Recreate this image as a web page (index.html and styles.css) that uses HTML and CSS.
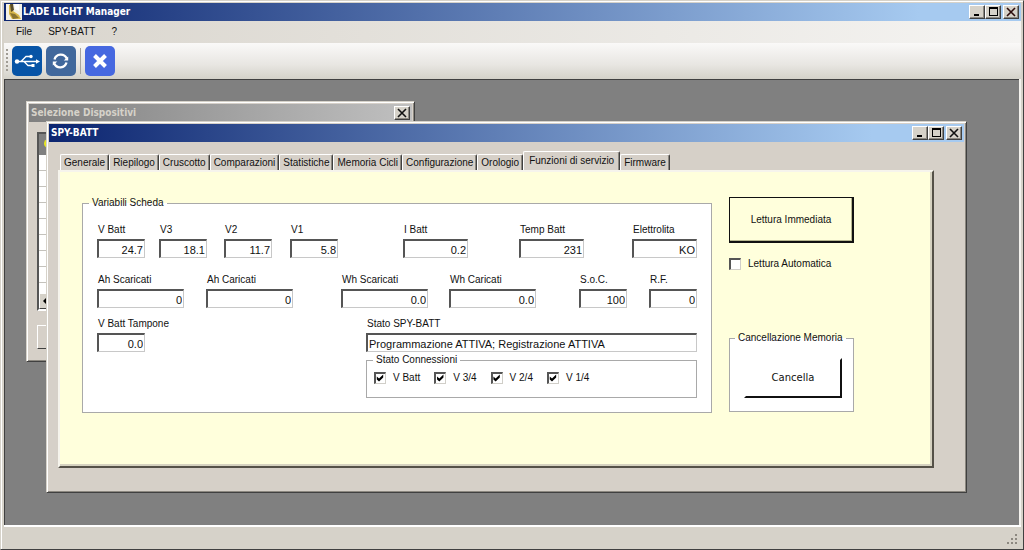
FILE: index.html
```html
<!DOCTYPE html>
<html lang="it">
<head>
<meta charset="utf-8">
<title>LADE LIGHT Manager</title>
<link rel="stylesheet" href="styles.css">
</head>
<body>
<div class="app">
  <header class="titlebar">
    <svg class="app-icon" viewBox="0 0 16 16" aria-hidden="true"><rect width="16" height="16" fill="#f4f1e6"/><path d="M3 1h4v6l6 4 2 4H6L3 10z" fill="#d9b84a"/><path d="M4 0h3l1 6-3 2z" fill="#5a4d2a"/><path d="M4 9l5 1 4 4-6 1z" fill="#8a7430"/><path d="M8 0h5v7l-4-2z" fill="#fff"/></svg>
    <h1 class="title">LADE LIGHT Manager</h1>
    <div class="controls">
      <button class="cap" type="button" aria-label="Riduci a icona"><svg viewBox="0 0 12 10"><path d="M3 7h5v2H3z"/></svg></button>
      <button class="cap" type="button" aria-label="Ingrandisci"><svg viewBox="0 0 12 10"><path fill-rule="evenodd" d="M2 0h9v9H2zM3 2v6h7V2z"/></svg></button>
      <button class="cap close" type="button" aria-label="Chiudi"><svg viewBox="0 0 12 10"><path d="M2 1l8 8M10 1L2 9" stroke="#2a0a0a" stroke-width="1.600"/></svg></button>
    </div>
  </header>
  <nav class="menu">
    <button type="button">File</button>
    <button type="button">SPY-BATT</button>
    <button type="button">?</button>
  </nav>
  <div class="toolbar">
    <span class="grip"></span>
    <button class="tool usb" type="button" aria-label="USB"><svg viewBox="0 0 30 30"><g fill="none" stroke="#fff" stroke-width="1.300"><path d="M5 15.500h20M9 15.500l5-5h4M12 15.500l4 4h4"/></g><circle cx="5" cy="15.500" r="2.200" fill="#fff"/><path d="M24 13.300l4 2.200-4 2.200z" fill="#fff"/><circle cx="19" cy="10.500" r="1.700" fill="#fff"/><path d="M19.500 18h3v3h-3z" fill="#fff"/></svg></button>
    <button class="tool sync" type="button" aria-label="Aggiorna"><svg viewBox="0 0 30 30"><g fill="none" stroke="#fff" stroke-width="2.300"><path d="M8.500 13.500a6.500 6.500 0 0 1 12.200-1"/><path d="M20.500 16.500a6.500 6.500 0 0 1-12.200 1"/></g><path d="M22.200 10.500v4h-4.500zM6.800 19.500v-4h4.500z" fill="#fff"/></svg></button>
    <span class="sep"></span>
    <button class="tool stop" type="button" aria-label="Chiudi"><svg viewBox="0 0 30 30"><path d="M9.500 9.500l11 11M20.500 9.500l-11 11" stroke="#fff" stroke-width="4"/></svg></button>
  </div>

  <main class="mdi">
    <section class="window devices">
      <header class="titlebar inactive">
        <h2 class="title">Selezione Dispositivi</h2>
        <div class="controls">
          <button class="cap" type="button" aria-label="Chiudi"><svg viewBox="0 0 12 10"><path d="M2 1l8 8M10 1L2 9" stroke="#111" stroke-width="1.600"/></svg></button>
        </div>
      </header>
      <div class="devices-body">
        <div class="list">
          <div class="list-head"><span class="dot"></span></div>
          <div class="list-rows"></div>
          <div class="list-scroll"><button class="arrow" type="button" aria-label="Scorri a sinistra"><svg viewBox="0 0 12 12"><path d="M6 2v8L2 6z"/></svg></button></div>
        </div>
        <button class="wide" type="button" aria-label="Apri"></button>
      </div>
    </section>

    <section class="window spy">
      <header class="titlebar">
        <h2 class="title">SPY-BATT</h2>
        <div class="controls">
          <button class="cap" type="button" aria-label="Riduci a icona"><svg viewBox="0 0 12 10"><path d="M3 7h5v2H3z"/></svg></button>
          <button class="cap" type="button" aria-label="Ingrandisci"><svg viewBox="0 0 12 10"><path fill-rule="evenodd" d="M2 0h9v9H2zM3 2v6h7V2z"/></svg></button>
          <button class="cap close" type="button" aria-label="Chiudi"><svg viewBox="0 0 12 10"><path d="M2 1l8 8M10 1L2 9" stroke="#111" stroke-width="1.600"/></svg></button>
        </div>
      </header>
      <div class="tabs" role="tablist">
        <button class="tab" role="tab" type="button">Generale</button>
        <button class="tab" role="tab" type="button">Riepilogo</button>
        <button class="tab" role="tab" type="button">Cruscotto</button>
        <button class="tab" role="tab" type="button">Comparazioni</button>
        <button class="tab" role="tab" type="button">Statistiche</button>
        <button class="tab" role="tab" type="button">Memoria Cicli</button>
        <button class="tab" role="tab" type="button">Configurazione</button>
        <button class="tab" role="tab" type="button">Orologio</button>
        <button class="tab active" role="tab" type="button" aria-selected="true">Funzioni di servizio</button>
        <button class="tab" role="tab" type="button">Firmware</button>
      </div>
      <div class="page">
        <fieldset class="group vars">
          <legend>Variabili Scheda</legend>
          <div class="row row-a">
            <div class="field"><label for="vbatt">V Batt</label><input class="s" id="vbatt" value="24.7"></div>
            <div class="field"><label for="v3">V3</label><input class="s" id="v3" value="18.1"></div>
            <div class="field"><label for="v2">V2</label><input class="s" id="v2" value="11.7"></div>
            <div class="field"><label for="v1">V1</label><input class="s" id="v1" value="5.8"></div>
            <div class="field"><label for="ibatt">I Batt</label><input class="m" id="ibatt" value="0.2"></div>
            <div class="field"><label for="temp">Temp Batt</label><input class="m" id="temp" value="231"></div>
            <div class="field"><label for="ele">Elettrolita</label><input class="m" id="ele" value="KO"></div>
          </div>
          <div class="row row-b">
            <div class="field"><label for="ahs">Ah Scaricati</label><input class="l" id="ahs" value="0"></div>
            <div class="field"><label for="ahc">Ah Caricati</label><input class="l" id="ahc" value="0"></div>
            <div class="field"><label for="whs">Wh Scaricati</label><input class="l" id="whs" value="0.0"></div>
            <div class="field"><label for="whc">Wh Caricati</label><input class="l" id="whc" value="0.0"></div>
            <div class="field"><label for="soc">S.o.C.</label><input class="s" id="soc" value="100"></div>
            <div class="field"><label for="rf">R.F.</label><input class="s" id="rf" value="0"></div>
          </div>
          <div class="row row-c">
            <div class="field"><label for="tamp">V Batt Tampone</label><input class="s" id="tamp" value="0.0"></div>
            <div class="status">
              <div class="field"><label for="stato">Stato SPY-BATT</label><input class="full" id="stato" value="Programmazione ATTIVA; Registrazione ATTIVA"></div>
              <fieldset class="group conn">
                <legend>Stato Connessioni</legend>
                <div class="checks">
                  <label class="check"><input type="checkbox" checked>V Batt</label>
                  <label class="check"><input type="checkbox" checked>V 3/4</label>
                  <label class="check"><input type="checkbox" checked>V 2/4</label>
                  <label class="check"><input type="checkbox" checked>V 1/4</label>
                </div>
              </fieldset>
            </div>
          </div>
        </fieldset>
        <div class="side">
          <button class="read" type="button">Lettura Immediata</button>
          <label class="check"><input type="checkbox">Lettura Automatica</label>
          <fieldset class="group erase">
            <legend>Cancellazione Memoria</legend>
            <button class="cancel" type="button">Cancella</button>
          </fieldset>
        </div>
      </div>
    </section>
  </main>

  <footer class="statusbar">
    <svg class="size-grip" viewBox="0 0 12 12" aria-hidden="true"><path d="M8 0h2v2H8zM8 4h2v2H8zM4 4h2v2H4zM8 8h2v2H8zM4 8h2v2H4zM0 8h2v2H0z" fill="#8c8880"/></svg>
  </footer>
</div>
</body>
</html>
```
FILE: styles.css
```css
* { box-sizing: border-box; }

body {
  margin: 0;
  font: 10px/12px "Liberation Sans", Arial, sans-serif;
  color: #111;
}

button, input { font: inherit; color: inherit; margin: 0; }
button { padding: 0; border: 0; background: none; }

.app {
  display: flex;
  flex-direction: column;
  height: 100vh;
  padding: 2px 2px 0 3px;
  background: #d6d2c9;
  border: 1px solid #d6d2c9;
  border-right-color: #404040;
  border-bottom-color: #404040;
  box-shadow: inset 1px 1px #fff;
}

/* Title bars */
.titlebar {
  display: flex;
  align-items: center;
  flex: none;
  height: 18px;
  padding: 0 2px;
  background: linear-gradient(90deg, #0c2570, #a6caf0 90%);
  color: #fff;
}
.titlebar.inactive {
  background: linear-gradient(90deg, #808080, #c0c0c0);
  color: #d6d2c9;
}
.title {
  margin: 0;
  flex: 1;
  font: bold 10px/16px "DejaVu Sans Condensed", "Noto Sans", sans-serif;
}
.app-icon { width: 16px; height: 16px; margin-right: 1px; }
.controls { display: flex; }
.cap {
  display: grid;
  place-items: center;
  width: 16px;
  height: 14px;
  background: #d6d2c9;
  border: 1px solid;
  border-color: #fff #404040 #404040 #fff;
  box-shadow: inset -1px -1px #8c8880;
}
.cap svg { width: 12px; height: 10px; }
.cap.close { margin-left: 2px; }

/* Menu and tool bar */
.menu {
  display: flex;
  align-items: center;
  flex: none;
  gap: 16px;
  height: 22px;
  padding-left: 12px;
  background: linear-gradient(90deg, #d9d5cd, #f5f4f2);
}
.toolbar {
  display: flex;
  align-items: center;
  flex: none;
  gap: 4px;
  height: 36px;
  padding-left: 2px;
  background: linear-gradient(#faf9f8, #e8e6e2 60%, #d4d2c9);
  border-radius: 0 0 3px 0;
}
.grip {
  width: 2px;
  height: 24px;
  background: repeating-linear-gradient(#a09c94 0 2px, transparent 2px 4px);
}
.tool { width: 30px; height: 30px; border-radius: 5px; }
.tool svg { display: block; }
.usb { background: #0754a6; }
.sync { background: #41689c; }
.stop { background: #4668e0; }
.sep { width: 1px; height: 26px; background: #a8a49c; }

/* MDI area */
.mdi {
  position: relative;
  flex: 1;
  overflow: hidden;
  background: #808080;
  border: 1px solid #404040;
  border-width: 1px 0 0 1px;
  box-shadow: 2px 0 #f4f2ee;
  margin-right: 2px;
}
.window {
  position: absolute;
  display: flex;
  flex-direction: column;
  padding: 2px;
  background: #d6d0c8;
  border: 1px solid;
  border-color: #d6d2c9 #404040 #404040 #d6d2c9;
  box-shadow: inset 1px 1px #fff, inset -1px -1px #8c8880;
}
.devices { left: 21px; top: 21px; width: 389px; height: 261px; }
.spy { left: 41px; top: 41px; width: 921px; height: 372px; }

.devices-body {
  display: flex;
  flex-direction: column;
  flex: 1;
  gap: 14px;
  padding: 10px 8px;
}
.list {
  display: flex;
  flex-direction: column;
  flex: 1;
  border: 2px solid;
  border-color: #555 #fff #fff #555;
}
.list-head { height: 21px; padding: 5px; background: #808080; }
.dot { display: block; width: 9px; height: 9px; border-radius: 50%; background: #e6e620; }
.list-rows {
  flex: 1;
  background: repeating-linear-gradient(#fff 0 15px, #c4c2bc 15px 16px);
}
.list-scroll { height: 16px; background: #ebe8e2; }
.arrow {
  display: grid;
  place-items: center;
  width: 16px;
  height: 16px;
  background: #d6d2c9;
  border: 1px solid;
  border-color: #fff #404040 #404040 #fff;
}
.arrow svg { width: 12px; height: 12px; }
.wide {
  width: 90px;
  height: 24px;
  border: 1px solid;
  border-color: #fff #404040 #404040 #fff;
}

/* Tabs */
.tabs {
  display: flex;
  align-items: flex-end;
  height: 28px;
  padding-left: 11px;
}
.tab {
  height: 16px;
  padding: 0 3px;
  border: 1px solid;
  border-color: #fff #404040 transparent #fff;
  border-bottom: 0;
  border-radius: 2px 2px 0 0;
  box-shadow: inset -1px 0 #8c8880;
  white-space: nowrap;
}
.tab.active { height: 19px; padding: 0 5px; background: #d6d0c8; }

.page {
  display: flex;
  align-items: flex-start;
  flex: 1;
  gap: 17px;
  margin: 0 30px 22px 9px;
  padding: 25px 78px 0 22px;
  background: #ffffdc;
  border: 2px solid;
  border-color: #f6f4ec #555148 #555148 #f6f4ec;
  box-shadow: inset -2px -2px #d6d2c0;
}

/* Group boxes and fields */
.group {
  min-width: 0;
  margin: 0;
  border: 1px solid #a9a9a9;
  background: #fff;
}
.group legend { padding: 0 3px; margin-left: 6px; white-space: nowrap; }
.vars { flex: 1; padding: 15px 14px 14px; }
.vars > legend { margin-left: -8px; }
.row { display: grid; }
.row-a { grid-template-columns: 62fr 65fr 66fr 113fr 116fr 113fr 65fr; }
.row-b { grid-template-columns: 109fr 135fr 108fr 130fr 70fr 48fr; margin-top: 16px; }
.row-c { grid-template-columns: 269fr 331fr; margin-top: 10px; }
.field { display: flex; flex-direction: column; gap: 3px; }
.field label { padding-left: 1px; white-space: nowrap; }
.field input {
  height: 19px;
  padding: 1px 1px 0;
  font-size: 11px;
  text-align: right;
  background: #fff;
  border: 1px solid;
  border-width: 2px 1px 1px 2px;
  border-color: #555 #c8c8c8 #c8c8c8 #555;
  border-radius: 0;
}
.field .s { width: 48px; }
.field .m { width: 65px; }
.field .l { width: 87px; }
.field .full { width: 100%; text-align: left; }
.conn { margin-top: 2px; padding: 6px 7px 13px; }
.conn legend { margin-left: -1px; }
.checks { display: flex; gap: 14px; }
.check { display: flex; align-items: center; gap: 7px; white-space: nowrap; }
.check input {
  appearance: none;
  flex: none;
  width: 12px;
  height: 12px;
  margin: 0;
  background: #fff;
  border: 1px solid;
  border-width: 2px 1px 1px 2px;
  border-color: #555 #d0cec8 #d0cec8 #555;
}
.check input:checked::before {
  content: "";
  display: block;
  width: 8px;
  height: 8px;
  background: #000;
  clip-path: polygon(10% 30%, 38% 55%, 90% 5%, 90% 45%, 38% 95%, 10% 68%);
}

/* Right column */
.side { display: flex; flex-direction: column; width: 125px; }
.read {
  height: 46px;
  margin-bottom: 15px;
  border: 1px solid #111;
  border-width: 1px 2px 2px 1px;
  box-shadow: inset -1px -1px #b8b890;
}
.side .check { margin-bottom: 62px; }
.erase { padding: 14px 11px 13px 14px; }
.erase legend { margin-left: -9px; }
.cancel {
  display: block;
  width: 100%;
  height: 40px;
  border: 2px solid;
  border-color: #fff #111 #111 #fff;
  font: 10px/12px "DejaVu Sans", sans-serif;
}

.statusbar {
  display: flex;
  justify-content: flex-end;
  align-items: flex-end;
  flex: none;
  height: 24px;
  padding: 0 2px 3px;
  border-top: 2px solid #fff;
}
.size-grip { width: 12px; height: 12px; }
```
